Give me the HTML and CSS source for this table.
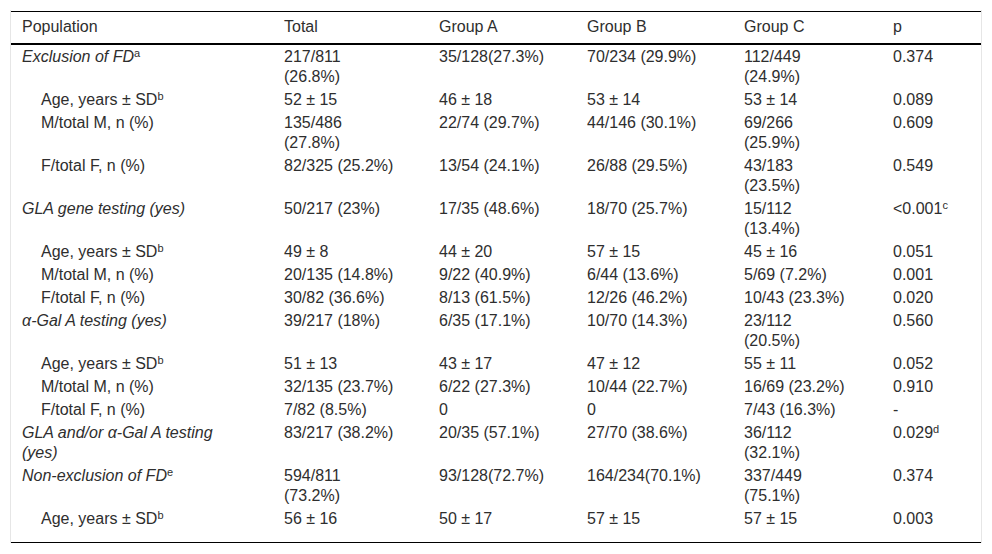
FILE: index.html
```html
<!DOCTYPE html>
<html lang="en">
<head>
<meta charset="utf-8">
<title>Population table</title>
<link rel="stylesheet" href="styles.css">
</head>
<body>
<div class="table-frame">
  <table class="data-table">
    <colgroup>
      <col class="c-pop">
      <col class="c-total">
      <col class="c-a">
      <col class="c-b">
      <col class="c-c">
      <col class="c-p">
    </colgroup>
    <thead>
      <tr><th>Population</th><th>Total</th><th>Group A</th><th>Group B</th><th>Group C</th><th>p</th></tr>
    </thead>
    <tbody>
      <tr><td><i>Exclusion of FD</i><sup>a</sup></td><td>217/811 (26.8%)</td><td>35/128(27.3%)</td><td>70/234 (29.9%)</td><td>112/449 (24.9%)</td><td>0.374</td></tr>
      <tr><td class="sub">Age, years ± SD<sup>b</sup></td><td>52 ± 15</td><td>46 ± 18</td><td>53 ± 14</td><td>53 ± 14</td><td>0.089</td></tr>
      <tr><td class="sub">M/total M, n (%)</td><td>135/486 (27.8%)</td><td>22/74 (29.7%)</td><td>44/146 (30.1%)</td><td>69/266 (25.9%)</td><td>0.609</td></tr>
      <tr><td class="sub">F/total F, n (%)</td><td>82/325 (25.2%)</td><td>13/54 (24.1%)</td><td>26/88 (29.5%)</td><td>43/183 (23.5%)</td><td>0.549</td></tr>
      <tr><td><i>GLA gene testing (yes)</i></td><td>50/217 (23%)</td><td>17/35 (48.6%)</td><td>18/70 (25.7%)</td><td>15/112 (13.4%)</td><td>&lt;0.001<sup>c</sup></td></tr>
      <tr><td class="sub">Age, years ± SD<sup>b</sup></td><td>49 ± 8</td><td>44 ± 20</td><td>57 ± 15</td><td>45 ± 16</td><td>0.051</td></tr>
      <tr><td class="sub">M/total M, n (%)</td><td>20/135 (14.8%)</td><td>9/22 (40.9%)</td><td>6/44 (13.6%)</td><td>5/69 (7.2%)</td><td>0.001</td></tr>
      <tr><td class="sub">F/total F, n (%)</td><td>30/82 (36.6%)</td><td>8/13 (61.5%)</td><td>12/26 (46.2%)</td><td>10/43 (23.3%)</td><td>0.020</td></tr>
      <tr><td><i>α-Gal A testing (yes)</i></td><td>39/217 (18%)</td><td>6/35 (17.1%)</td><td>10/70 (14.3%)</td><td>23/112 (20.5%)</td><td>0.560</td></tr>
      <tr><td class="sub">Age, years ± SD<sup>b</sup></td><td>51 ± 13</td><td>43 ± 17</td><td>47 ± 12</td><td>55 ± 11</td><td>0.052</td></tr>
      <tr><td class="sub">M/total M, n (%)</td><td>32/135 (23.7%)</td><td>6/22 (27.3%)</td><td>10/44 (22.7%)</td><td>16/69 (23.2%)</td><td>0.910</td></tr>
      <tr><td class="sub">F/total F, n (%)</td><td>7/82 (8.5%)</td><td>0</td><td>0</td><td>7/43 (16.3%)</td><td>-</td></tr>
      <tr><td><i>GLA and/or α-Gal A testing (yes)</i></td><td>83/217 (38.2%)</td><td>20/35 (57.1%)</td><td>27/70 (38.6%)</td><td>36/112 (32.1%)</td><td>0.029<sup>d</sup></td></tr>
      <tr><td><i>Non-exclusion of FD</i><sup>e</sup></td><td>594/811 (73.2%)</td><td>93/128(72.7%)</td><td>164/234(70.1%)</td><td>337/449 (75.1%)</td><td>0.374</td></tr>
      <tr class="last"><td class="sub">Age, years ± SD<sup>b</sup></td><td>56 ± 16</td><td>50 ± 17</td><td>57 ± 15</td><td>57 ± 15</td><td>0.003</td></tr>
    </tbody>
  </table>
</div>
</body>
</html>
```

FILE: styles.css
```css
html, body {
  margin: 0;
  padding: 0;
  background: #fff;
}

body {
  font-family: "Liberation Sans", Arial, Helvetica, sans-serif;
  font-size: 16px;
  color: #2e2e2e;
}

.table-frame {
  margin: 10px 0 0 10px;
  width: 970px;
  padding-top: 1px;
  border-left: 1px solid #e6e6e6;
  border-right: 1px solid #e6e6e6;
}

.data-table {
  width: 970px;
  table-layout: fixed;
  border-collapse: collapse;
  border-top: 1px solid #000;
  border-bottom: 1px solid #000;
}

.c-pop { width: 262px; }
.c-total { width: 155px; }
.c-a { width: 148px; }
.c-b { width: 157px; }
.c-c { width: 149px; }
.c-p { width: 99px; }

.data-table th {
  font-weight: normal;
  text-align: left;
  line-height: 20px;
  padding: 5px 31px 6px 11px;
  border-bottom: 2px solid #000;
}

.data-table td {
  text-align: left;
  vertical-align: top;
  line-height: 20px;
  padding: 2px 31px 1px 11px;
}

.data-table td.sub {
  padding-left: 30px;
}

.data-table tr.last td {
  padding-bottom: 13px;
}

.data-table sup {
  font-size: 11px;
  line-height: 0;
  vertical-align: 5px;
}
```
